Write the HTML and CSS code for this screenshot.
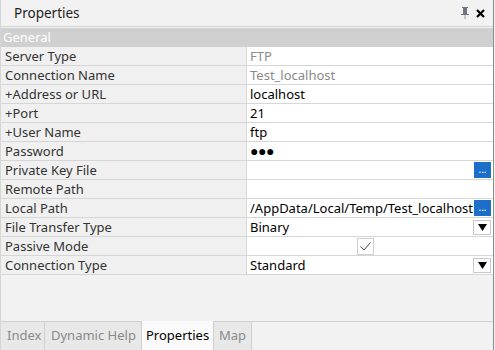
FILE: index.html
```html
<!DOCTYPE html>
<html>
<head>
<meta charset="utf-8">
<link rel="stylesheet" href="styles.css">
</head>
<body>
<div class="panel">
  <div class="titlebar">
    <span class="title">Properties</span>
    <span class="tools">
      <svg class="pin" width="8" height="12" viewBox="0 0 8 12"><rect x="1" y="0" width="6" height="1" fill="#6d7580"/><rect x="2" y="1" width="4" height="6" fill="#6d7580"/><rect x="0" y="7" width="8" height="1" fill="#6d7580"/><rect x="3.5" y="8" width="1" height="4" fill="#9aa0a8"/></svg>
      <svg class="close" width="9" height="9" viewBox="0 0 9 9"><path d="M1 1 L8 8 M8 1 L1 8" stroke="#000" stroke-width="2.2"/></svg>
    </span>
  </div>
  <div class="grid">
    <div class="band">General</div>
    <div class="row"><div class="lbl">Server Type</div><div class="val dim">FTP</div></div>
    <div class="row"><div class="lbl">Connection Name</div><div class="val dim">Test_localhost</div></div>
    <div class="row"><div class="lbl">+Address or URL</div><div class="val">localhost</div></div>
    <div class="row"><div class="lbl">+Port</div><div class="val">21</div></div>
    <div class="row"><div class="lbl">+User Name</div><div class="val">ftp</div></div>
    <div class="row"><div class="lbl">Password</div><div class="val dots">●●●</div></div>
    <div class="row"><div class="lbl">Private Key File</div><div class="val"><span class="txt"></span><span class="btn">...</span></div></div>
    <div class="row"><div class="lbl">Remote Path</div><div class="val"></div></div>
    <div class="row"><div class="lbl">Local Path</div><div class="val"><span class="txt clip">/AppData/Local/Temp/Test_localhost</span><span class="btn">...</span></div></div>
    <div class="row"><div class="lbl">File Transfer Type</div><div class="val"><span class="txt">Binary</span><span class="drop"><svg width="9" height="7" viewBox="0 0 9 7"><path d="M0 0 H9 L4.5 7 Z" fill="#000"/></svg></span></div></div>
    <div class="row"><div class="lbl">Passive Mode</div><div class="val center"><span class="check"><svg width="11" height="9" viewBox="0 0 11 9"><path d="M0.5 4.5 L4 8 L10.5 0.5" fill="none" stroke="#444" stroke-width="1"/></svg></span></div></div>
    <div class="row"><div class="lbl">Connection Type</div><div class="val"><span class="txt">Standard</span><span class="drop"><svg width="9" height="7" viewBox="0 0 9 7"><path d="M0 0 H9 L4.5 7 Z" fill="#000"/></svg></span></div></div>
  </div>
  <div class="spacer"></div>
  <div class="tabs">
    <div class="tab t-index">Index</div>
    <div class="tab t-help">Dynamic Help</div>
    <div class="tab t-props active">Properties</div>
    <div class="tab t-map">Map</div>
    <div class="tabrest"></div>
  </div>
</div>
</body>
</html>
```
FILE: styles.css
```css
* { box-sizing: border-box; }
html, body { margin: 0; padding: 0; }
body {
  font-family: "Noto Sans", "Open Sans", sans-serif;
  font-size: 13px;
  background: #f2f2f2;
  width: 495px;
  height: 350px;
  overflow: hidden;
}
.panel {
  width: 494px;
  height: 350px;
  display: flex;
  flex-direction: column;
  border-left: 1px solid #d6d6d6;
  border-right: 1px solid #8c8c8c;
  background: #f2f2f2;
}
.titlebar {
  height: 27px;
  display: flex;
  align-items: center;
  justify-content: space-between;
  padding: 0 8px 0 13px;
  border-bottom: 1px solid #d4d4d4;
  color: #1e1e1e;
  font-size: 13.5px;
}
.tools { display: flex; align-items: center; gap: 7px; }
.grid { margin-top: 1px; }
.band {
  height: 19px;
  background: #d0d0d0;
  color: #fff;
  line-height: 18px;
  padding-left: 2px;
}
.row {
  display: grid;
  grid-template-columns: 246px 1fr;
  height: 19px;
  border-bottom: 1px solid #d6d6d6;
}
.lbl {
  background: #f0f0f0;
  border-right: 1px solid #d6d6d6;
  padding-left: 4px;
  line-height: 18px;
  color: #333;
  white-space: nowrap;
}
.val {
  background: #fff;
  padding-left: 3px;
  line-height: 18px;
  color: #000;
  display: flex;
  align-items: center;
  white-space: nowrap;
  overflow: hidden;
}
.val.dim { color: #8a8a8a; }
.val.dots { font-size: 14px; letter-spacing: -0.5px; }
.txt { flex: 1; overflow: hidden; }
.val.center { justify-content: center; padding-left: 0; padding-right: 10px; }
.btn {
  width: 17px;
  height: 16px;
  margin-right: 2px;
  background: #1c6fc8;
  color: #fff;
  font-size: 10px;
  line-height: 14px;
  text-align: center;
  flex: none;
}
.drop {
  width: 18px;
  height: 15px;
  margin-right: 2px;
  border: 1px solid #c8c8c8;
  background: #fff;
  display: flex;
  align-items: center;
  justify-content: center;
  flex: none;
}
.check {
  width: 17px;
  height: 17px;
  border: 1px solid #d0d0d0;
  display: flex;
  align-items: center;
  justify-content: center;
  background: #fff;
}
.spacer { flex: 1; }
.tabs {
  height: 29px;
  display: flex;
  border-top: 1px solid #cfcfcf;
}
.tab {
  padding-left: 6px;
  line-height: 27px;
  color: #8a8a8a;
  background: #e8e8e8;
  border-right: 1px solid #cfcfcf;
  font-size: 13px;
  white-space: nowrap;
  flex: none;
}
.t-index { width: 44px; }
.t-help { width: 97px; }
.t-props { width: 72px; padding-left: 4px; }
.t-map { width: 38px; padding-left: 5px; }
.tab.active {
  background: #fafafa;
  color: #000;
  margin-top: -1px;
  line-height: 28px;
}
.tabrest { flex: 1; background: #f2f2f2; }
```
